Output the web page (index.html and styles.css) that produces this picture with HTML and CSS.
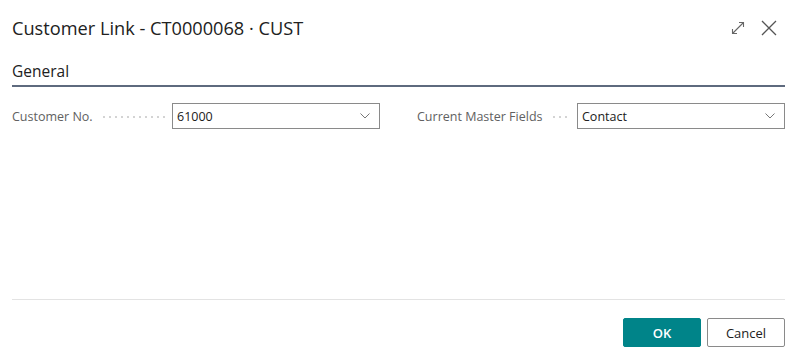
FILE: index.html
```html
<!doctype html>
<html lang="en">
<head>
  <meta charset="UTF-8" />
  <title>Customer Link - CT0000068 · CUST</title>
  <link rel="stylesheet" href="styles.css">
</head>
<body>

  <div class="dialog">
    <div class="dialog-head">
      <h1 class="dialog-title">Customer Link - CT0000068 · CUST</h1>
      <div class="head-icons">
        <!-- expand -->
        <svg class="icon" width="16" height="16" viewBox="0 0 16 16">
          <path d="M2.5 13.5 L13.5 2.5 M9 2.5 H13.5 V7 M2.5 9 V13.5 H7" fill="none" stroke="#666" stroke-width="1.1" />
        </svg>
        <!-- close -->
        <svg class="icon close" width="16" height="16" viewBox="0 0 16 16">
          <path d="M1 1 L15 15 M15 1 L1 15" fill="none" stroke="#555" stroke-width="1.3" />
        </svg>
      </div>
    </div>

    <div class="section">
      <h2 class="section-title">General</h2>

      <div class="fields">
        <div class="field">
          <label class="field-label">Customer No.</label>
          <div class="select">
            <span>61000</span>
            <svg width="10" height="6" viewBox="0 0 10 6"><path d="M0.5 0.5 L5 5 L9.5 0.5" fill="none" stroke="#777" stroke-width="1"/></svg>
          </div>
        </div>
        <div class="field">
          <label class="field-label">Current Master Fields</label>
          <div class="select">
            <span>Contact</span>
            <svg width="10" height="6" viewBox="0 0 10 6"><path d="M0.5 0.5 L5 5 L9.5 0.5" fill="none" stroke="#777" stroke-width="1"/></svg>
          </div>
        </div>
      </div>
    </div>

    <div class="dialog-foot">
      <button class="btn btn-primary">OK</button>
      <button class="btn">Cancel</button>
    </div>
  </div>

</body>
</html>
```

FILE: styles.css
```css
body {
  margin: 0;
  background: white;
  font-family: "Open Sans", "Noto Sans", sans-serif;
  color: #212121;
}

.dialog {
  height: 362px;
  padding: 0 15px 0 12px;
  display: flex;
  flex-direction: column;
  box-sizing: border-box;
}

.dialog-head {
  display: flex;
  align-items: center;
  justify-content: space-between;
  height: 55px;
}

.dialog-title {
  margin: 0;
  font-size: 18.2px;
  font-weight: 400;
  color: #212121;
}

.head-icons {
  display: flex;
  gap: 15px;
  align-items: center;
  margin-right: 8px;
}

.icon {
  display: block;
}

.section {
  flex: 1;
}

.section-title {
  margin: 5px 0 0;
  font-size: 15.5px;
  font-weight: 400;
  padding-bottom: 3px;
  border-bottom: 2px solid #5e6a7e;
  color: #212121;
}

.fields {
  display: grid;
  grid-template-columns: 1fr 1fr;
  column-gap: 37px;
  margin-top: 16px;
}

.field {
  display: flex;
  align-items: center;
}

.field-label {
  width: 160px;
  flex: none;
  display: flex;
  align-items: center;
  font-size: 12.5px;
  color: #616161;
  white-space: nowrap;
  overflow: hidden;
}

.field-label::after {
  content: "";
  flex: 1;
  height: 2px;
  margin: 2px 7px 0 8px;
  background-image: radial-gradient(circle, #bbb 0.6px, transparent 0.9px);
  background-size: 6px 2px;
}

.select {
  flex: 1;
  height: 26px;
  border: 1px solid #8a8a8a;
  box-sizing: border-box;
  display: flex;
  align-items: center;
  justify-content: space-between;
  padding: 0 9px 0 4px;
  font-size: 12.5px;
  color: #212121;
}

.dialog-foot {
  border-top: 1px solid #e3e3e3;
  display: flex;
  justify-content: flex-end;
  gap: 6px;
  padding: 18px 0 15px;
}

.btn {
  width: 78px;
  height: 29px;
  border: 1px solid #8a8a8a;
  border-radius: 2px;
  background: white;
  font-family: inherit;
  font-size: 13px;
  color: #212121;
}

.btn-primary {
  background: #008489;
  border-color: #008489;
  color: white;
  font-weight: 600;
}
```
